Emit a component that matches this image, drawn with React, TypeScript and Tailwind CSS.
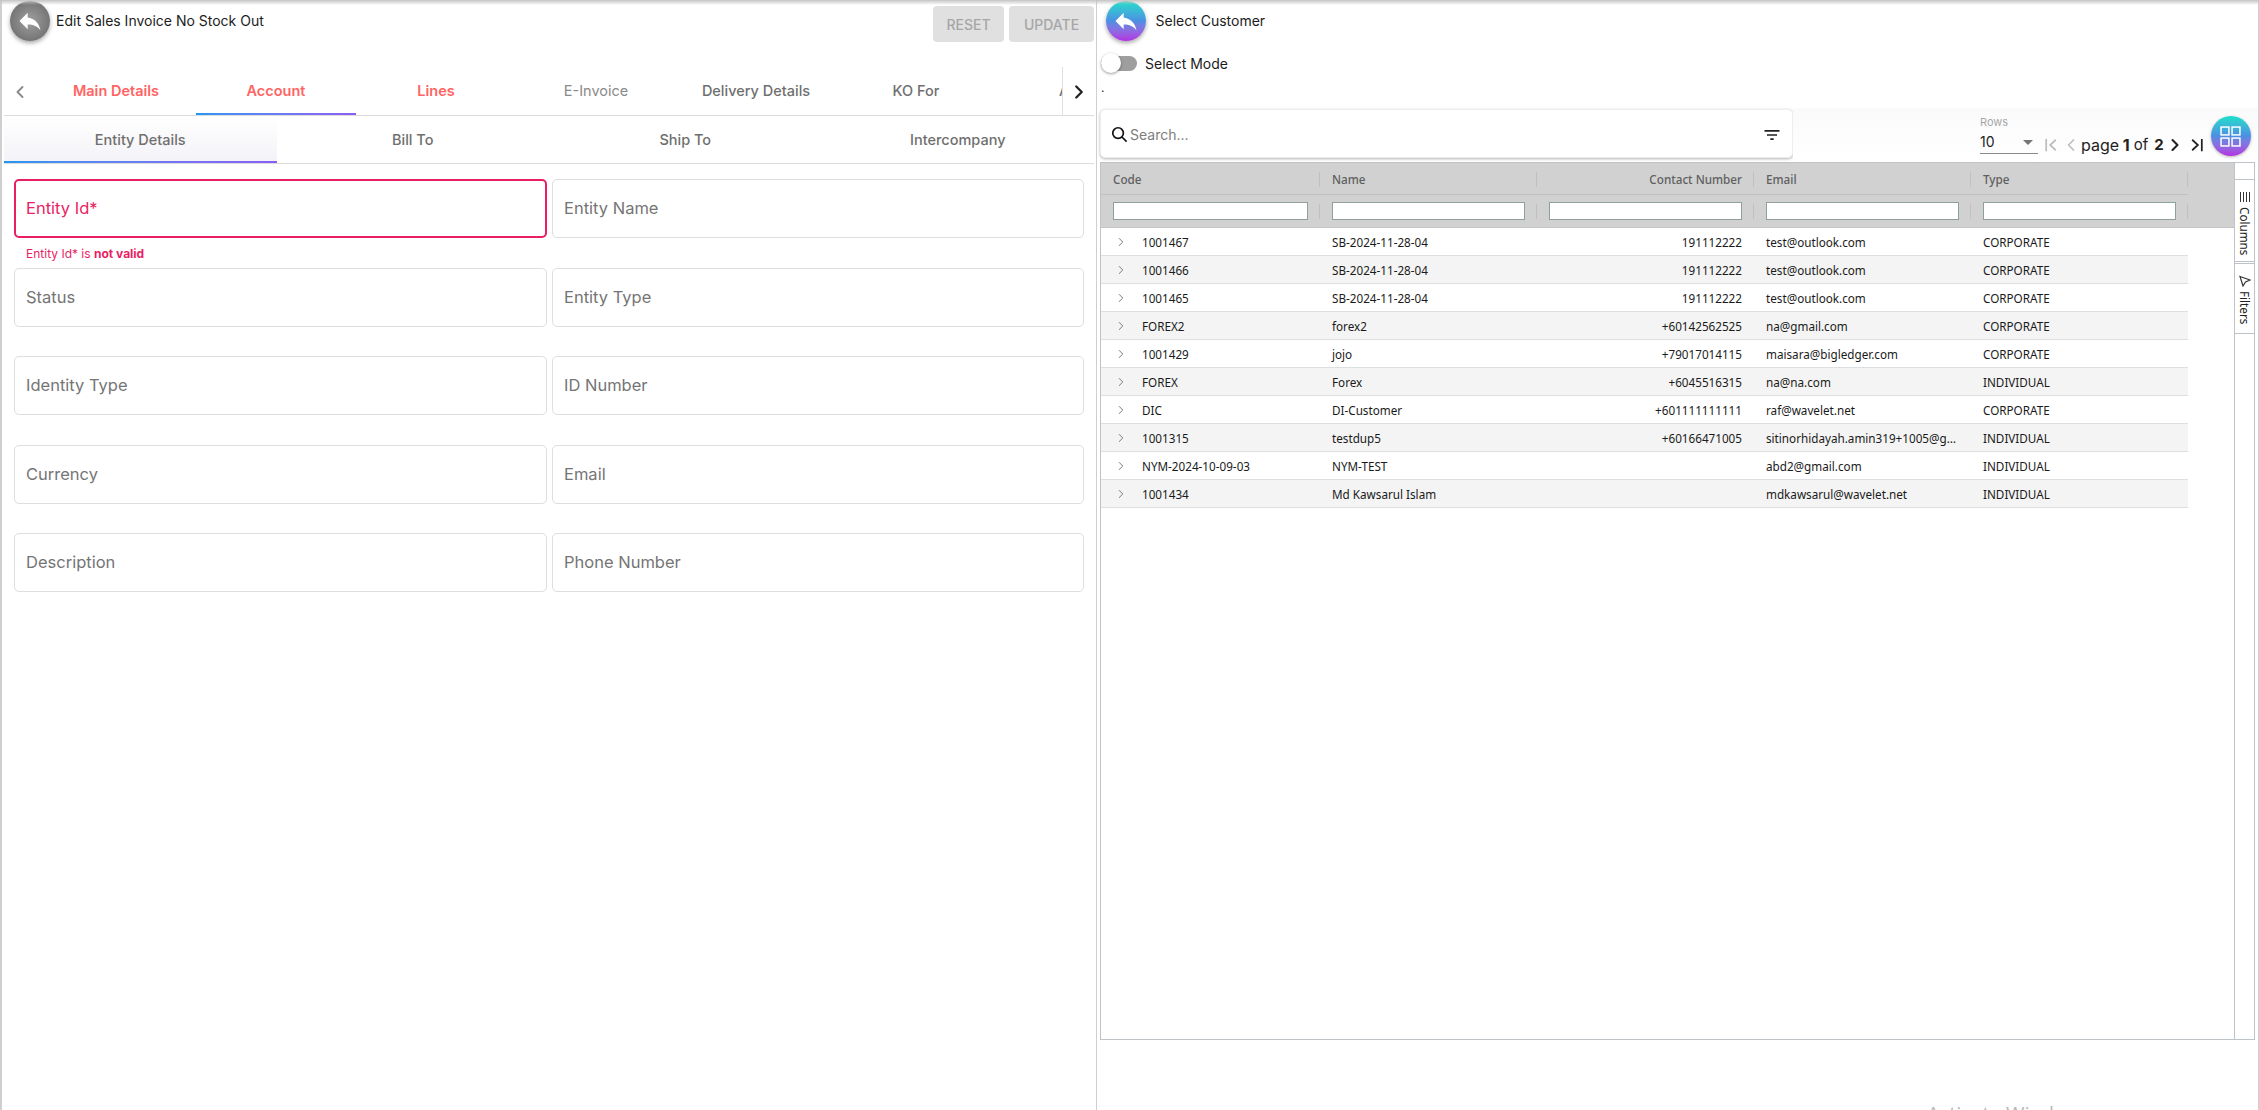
import { ChevronLeft, ChevronRight } from "lucide-react";

const MAIN_TABS = [
  { label: "Main Details", cls: "font-semibold text-[#ff6464]" },
  { label: "Account", cls: "font-semibold text-[#ff6464]" },
  { label: "Lines", cls: "font-semibold text-[#ff6464]" },
  { label: "E-Invoice", cls: "text-[#8a8a8a]" },
  { label: "Delivery Details", cls: "text-[#6f6f6f] font-medium" },
  { label: "KO For", cls: "text-[#6f6f6f] font-medium" },
];

const SUB_TABS = ["Entity Details", "Bill To", "Ship To", "Intercompany"];

const FIELDS = [
  ["Entity Id*", "Entity Name"],
  ["Status", "Entity Type"],
  ["Identity Type", "ID Number"],
  ["Currency", "Email"],
  ["Description", "Phone Number"],
];

const ROWS = [
  ["1001467", "SB-2024-11-28-04", "191112222", "test@outlook.com", "CORPORATE"],
  ["1001466", "SB-2024-11-28-04", "191112222", "test@outlook.com", "CORPORATE"],
  ["1001465", "SB-2024-11-28-04", "191112222", "test@outlook.com", "CORPORATE"],
  ["FOREX2", "forex2", "+60142562525", "na@gmail.com", "CORPORATE"],
  ["1001429", "jojo", "+79017014115", "maisara@bigledger.com", "CORPORATE"],
  ["FOREX", "Forex", "+6045516315", "na@na.com", "INDIVIDUAL"],
  ["DIC", "DI-Customer", "+601111111111", "raf@wavelet.net", "CORPORATE"],
  ["1001315", "testdup5", "+60166471005", "sitinorhidayah.amin319+1005@gmail.com", "INDIVIDUAL"],
  ["NYM-2024-10-09-03", "NYM-TEST", "", "abd2@gmail.com", "INDIVIDUAL"],
  ["1001434", "Md Kawsarul Islam", "", "mdkawsarul@wavelet.net", "INDIVIDUAL"],
];

function BackButton({ gradient }: { gradient: string }) {
  return (
    <button className={`w-10 h-10 rounded-full flex items-center justify-center shrink-0 shadow-[0_2px_4px_rgba(0,0,0,0.35)] ${gradient}`}>
      <svg viewBox="0 0 24 24" className="w-7 h-7 fill-white">
        <path d="M10 9V5l-7 7 7 7v-4.1c5 0 8.5 1.6 11 5.1-1-5-4-10-11-11z" />
      </svg>
    </button>
  );
}

function LeftPanel() {
  return (
    <div className="w-[1096px] h-full shrink-0 border-l-2 border-[#cfcfcf] flex flex-col">
      {/* Title bar */}
      <div className="h-[65px] shrink-0 flex items-start pl-2 pt-px">
        <BackButton gradient="bg-radial from-[#a0a0a0] to-[#646464]" />
        <span className="ml-1.5 mt-2.5 text-[14px] leading-5 text-[#1c1c1c]">Edit Sales Invoice No Stock Out</span>
        <div className="ml-auto mt-[5px] mr-[2px] flex gap-[5px]">
          <button className="w-[71px] h-9 rounded bg-[#e0e0e0] text-[#a6a6a6] text-[14px] font-medium">RESET</button>
          <button className="w-[85px] h-9 rounded bg-[#e0e0e0] text-[#a6a6a6] text-[14px] font-medium">UPDATE</button>
        </div>
      </div>

      {/* Main tabs */}
      <div className="relative h-[51px] shrink-0 mx-[2px] flex border-b border-[#dcdcdc] overflow-hidden">
        <div className="absolute left-[6px] top-[17px] text-[#8a8a8a]">
          <ChevronLeft size={20} strokeWidth={2.25} />
        </div>
        <div className="w-[32px] shrink-0" />
        {MAIN_TABS.map((t) => (
          <div key={t.label} className={`w-[160px] h-full shrink-0 flex items-center justify-center pt-[2px] text-[14.5px] relative ${t.cls}`}>
            {t.label}
            {t.label === "Account" && (
              <div className="absolute left-0 right-0 bottom-0 h-[2px] bg-linear-to-r from-[#2196f3] to-[#8b5cf6]" />
            )}
          </div>
        ))}
        <div className="pl-[63px] pt-[2px] text-[14.5px] font-medium text-[#6f6f6f] flex items-center">A</div>
        <div className="absolute right-0 bottom-0 w-[32px] h-[48px] bg-white border-l border-[#e0e0e0] flex items-center pl-[5px] pt-[2px]">
          <ChevronRight size={22} strokeWidth={2.5} className="text-[#222222]" />
        </div>
      </div>

      {/* Sub tabs */}
      <div className="h-[48px] shrink-0 mx-[2px] flex border-b border-[#dcdcdc]">
        {SUB_TABS.map((t, i) => (
          <div
            key={t}
            className={
              i === 0
                ? "flex-1 relative flex items-center justify-center text-[14.5px] text-[#6f6f6f] font-medium bg-linear-to-b from-white to-[#f3f2f7]"
                : "flex-1 flex items-center justify-center text-[14.5px] text-[#6f6f6f] font-medium"
            }
          >
            {t}
            {i === 0 && <div className="absolute left-0 right-0 bottom-0 h-[2px] bg-linear-to-r from-[#2196f3] to-[#8b5cf6]" />}
          </div>
        ))}
      </div>

      {/* Form */}
      <div className="pt-[15px] pl-3 pr-[10px]">
        {FIELDS.map((row, r) => (
          <div key={r} className="h-[88.5px] grid grid-cols-[533px_532px] gap-x-[5px]">
            {row.map((label, c) => {
              const invalid = label === "Entity Id*";
              return (
                <div key={label}>
                  <div
                    className={
                      invalid
                        ? "h-[59px] rounded-[5px] border-2 border-[#e91e63] flex items-center pl-[10px] text-[16.5px] text-[#e91e63]"
                        : "h-[59px] rounded-[5px] border border-[#dedede] flex items-center pl-[11px] text-[16.5px] text-[#757575]"
                    }
                  >
                    {label}
                  </div>
                  {invalid && c === 0 && (
                    <div className="mt-[8px] ml-3 text-[12px] leading-4 text-[#e91e63]">
                      Entity Id* is <b className="font-bold">not valid</b>
                    </div>
                  )}
                </div>
              );
            })}
          </div>
        ))}
      </div>
    </div>
  );
}

function Toolbar() {
  return (
    <div className="h-[54px] shrink-0 flex items-start">
      <div className="mt-px w-[693px] h-[49px] shrink-0 rounded-[5px] bg-white border border-[#eeeeee] shadow-[0_1px_3px_rgba(0,0,0,0.3)] flex items-center pl-[10px] pr-2.5 pt-[2px]">
        <svg viewBox="0 0 24 24" className="w-[17px] h-[17px] fill-none stroke-[#111111] stroke-[2.4]">
          <circle cx="10" cy="10" r="7.5" />
          <path d="M15.5 15.5 22 22" />
        </svg>
        <span className="ml-[2px] text-[14px] text-[#7d7d7d]">Search...</span>
        <svg viewBox="0 0 24 24" className="w-5 h-5 ml-auto fill-[#222222]">
          <path d="M10 18h4v-2h-4v2zM3 6v2h18V6H3zm3 7h12v-2H6v2z" />
        </svg>
      </div>
      <div className="h-full flex-1 flex items-start bg-linear-to-b from-[#fafafa] to-white">
        <div className="ml-[187px] w-[58px] h-[47px] mt-[-1px] pt-[9px] shrink-0 border-b border-[#8a8a8a] relative">
          <div className="text-[11px] leading-3 text-[#a8a8a8]">Rows</div>
          <div className="mt-[4px] text-[14px] leading-5 text-[#222222]">10</div>
          <div className="absolute right-[5px] top-[33px] w-0 h-0 border-x-[5px] border-x-transparent border-t-[5px] border-t-[#757575]" />
        </div>
        <div className="mt-[24px] ml-[6px] flex items-center h-[26px] shrink-0 text-[#222222]">
          <svg viewBox="0 0 14 16" className="w-[14px] h-[14px] fill-none stroke-[#bdbdbd] stroke-2">
            <path d="M1.5 1v14M12.5 2 6 8l6.5 6" />
          </svg>
          <ChevronLeft size={20} strokeWidth={2} className="ml-[3px] text-[#bdbdbd]" />
          <span className="text-[16px]">page</span>
          <b className="text-[16px]">&nbsp;1</b>
          <span className="ml-[4px] text-[15px]">of</span>
          <b className="ml-[6px] text-[15px]">2</b>
          <ChevronRight size={20} strokeWidth={2.5} className="ml-[1px] text-[#222222]" />
          <svg viewBox="0 0 14 16" className="ml-[5px] w-[14px] h-[14px] fill-none stroke-[#222222] stroke-2">
            <path d="M1.5 2 8 8l-6.5 6M12.5 1v14" />
          </svg>
        </div>
        <button className="mt-[8px] ml-[7px] w-10 h-10 shrink-0 rounded-full flex items-center justify-center bg-linear-to-b from-[#14dfc9] via-[#4b8fe2] to-[#b12ee0] shadow-[0_1px_3px_rgba(0,0,0,0.3)]">
          <svg viewBox="0 0 20 20" className="w-[21px] h-[21px] fill-none stroke-white stroke-[1.4]">
            <rect x="1" y="1" width="7.5" height="7.5" />
            <rect x="11.5" y="1" width="7.5" height="7.5" />
            <rect x="1" y="11.5" width="7.5" height="7.5" />
            <rect x="11.5" y="11.5" width="7.5" height="7.5" />
          </svg>
        </button>
      </div>
    </div>
  );
}

function DataGrid() {
  const cols = [
    { name: "Code", w: "w-[219px]" },
    { name: "Name", w: "w-[217px]" },
    { name: "Contact Number", w: "w-[217px]", right: true },
    { name: "Email", w: "w-[217px]" },
    { name: "Type", w: "w-[217px]" },
  ];
  return (
    <div className="w-[1155px] h-[878px] shrink-0 border border-[#bdc3c7] flex font-['Noto_Sans',sans-serif] text-[11.7px]">
      <div className="flex-1 min-w-0">
        {/* Header */}
        <div className="bg-[#d1d1d1]">
          <div className="flex h-[32px]">
            <div className="flex w-[1087px] border-b border-[#c0c0c0]">
              {cols.map((c) => (
                <div key={c.name} className={`${c.w} h-full flex items-center px-3 pt-[2px] relative text-[#5f5f5f] font-medium ${c.right ? "justify-end" : ""}`}>
                  {c.name}
                  <div className="absolute right-0 top-[9px] h-[15px] w-px bg-[#c0c0c0]" />
                </div>
              ))}
            </div>
          </div>
          <div className="flex h-[33px] border-b border-[#c4c4c4]">
            {cols.map((c) => (
              <div key={c.name} className={`${c.w} h-full flex items-center px-3 relative`}>
                <div className="w-full h-[18px] bg-white border border-[#8fa09c]" />
                <div className="absolute right-0 top-[9px] h-[15px] w-px bg-[#c0c0c0]" />
              </div>
            ))}
          </div>
        </div>
        {/* Rows */}
        <div className="w-[1087px]">
          {ROWS.map((row, i) => (
            <div key={row[0]} className={`flex h-[28px] items-center pt-[2px] border-b border-[#dde0e3] text-[#1a1a1a] ${i % 2 ? "bg-[#f4f4f4]" : "bg-white"}`}>
              <div className="w-[219px] pl-[13px] flex items-center">
                <ChevronRight size={14} strokeWidth={1.5} className="text-[#666666]" />
                <span className="ml-[14px]">{row[0]}</span>
              </div>
              <div className="w-[217px] px-3 truncate">{row[1]}</div>
              <div className="w-[217px] px-3 text-right">{row[2]}</div>
              <div className="w-[217px] px-3 truncate">{row[3]}</div>
              <div className="w-[217px] px-3">{row[4]}</div>
            </div>
          ))}
        </div>
      </div>
      {/* Side bar */}
      <div className="w-5 shrink-0 border-l border-[#bdc3c7] pt-4 text-[#222222]">
        <div className="h-[83px] border-y border-[#bdc3c7] flex flex-col items-center pt-[11px]">
          <svg viewBox="0 0 12 12" className="w-3 h-3 stroke-[#333333] stroke-1">
            <path d="M1.5 1v10M4.5 1v10M7.5 1v10M10.5 1v10" />
          </svg>
          <span className="mt-[4px] leading-[20px] [writing-mode:vertical-rl]">Columns</span>
        </div>
        <div className="mt-px h-[71px] border-y border-[#bdc3c7] flex flex-col items-center pt-[11px]">
          <svg viewBox="0 0 12 12" className="w-3 h-3 fill-none stroke-[#333333] stroke-[1.2]">
            <path d="M1 1.5 11 5 6.5 7 4 11z" />
          </svg>
          <span className="mt-[4px] leading-[20px] [writing-mode:vertical-rl]">Filters</span>
        </div>
      </div>
    </div>
  );
}

function RightPanel() {
  return (
    <div className="flex-1 min-w-0 h-full border-l border-[#cfcfcf] border-r-[1px] pl-[3px] flex flex-col">
      <div className="h-[49px] shrink-0 flex items-start pl-[5.5px] pt-px">
        <BackButton gradient="bg-linear-to-b from-[#14dfc9] via-[#4b8fe2] to-[#b12ee0]" />
        <span className="ml-2.5 mt-2.5 text-[14px] leading-5 text-[#1c1c1c]">Select Customer</span>
      </div>
      <div className="h-[30px] shrink-0 flex items-center pl-[1px] pb-[1px]">
        <div className="relative w-9 h-[15px] rounded-full bg-[#9e9e9e]">
          <div className="absolute left-0 top-[-3px] w-5 h-5 rounded-full bg-white shadow-[0_1px_3px_rgba(0,0,0,0.4)]" />
        </div>
        <span className="ml-2 text-[14px] text-[#1c1c1c]">Select Mode</span>
      </div>
      <div className="h-[29px] shrink-0 text-[12px] leading-[18px] text-[#222222] pl-[1px]">.</div>
      <Toolbar />
      <DataGrid />
    </div>
  );
}

export default function App() {
  return (
    <div className="relative w-[2259px] h-[1110px] flex overflow-hidden bg-white font-['Inter',sans-serif]">
      <LeftPanel />
      <RightPanel />
      {/* Top edge shadow */}
      <div className="absolute left-0 right-0 top-0 h-[5px] bg-linear-to-b from-[#c4c4c4] to-transparent" />
      {/* OS watermark */}
      <div className="absolute left-[1927px] top-[1099px] text-[20px] text-[#b8b8b8] font-['Open_Sans',sans-serif]">Activate Windows</div>
    </div>
  );
}
